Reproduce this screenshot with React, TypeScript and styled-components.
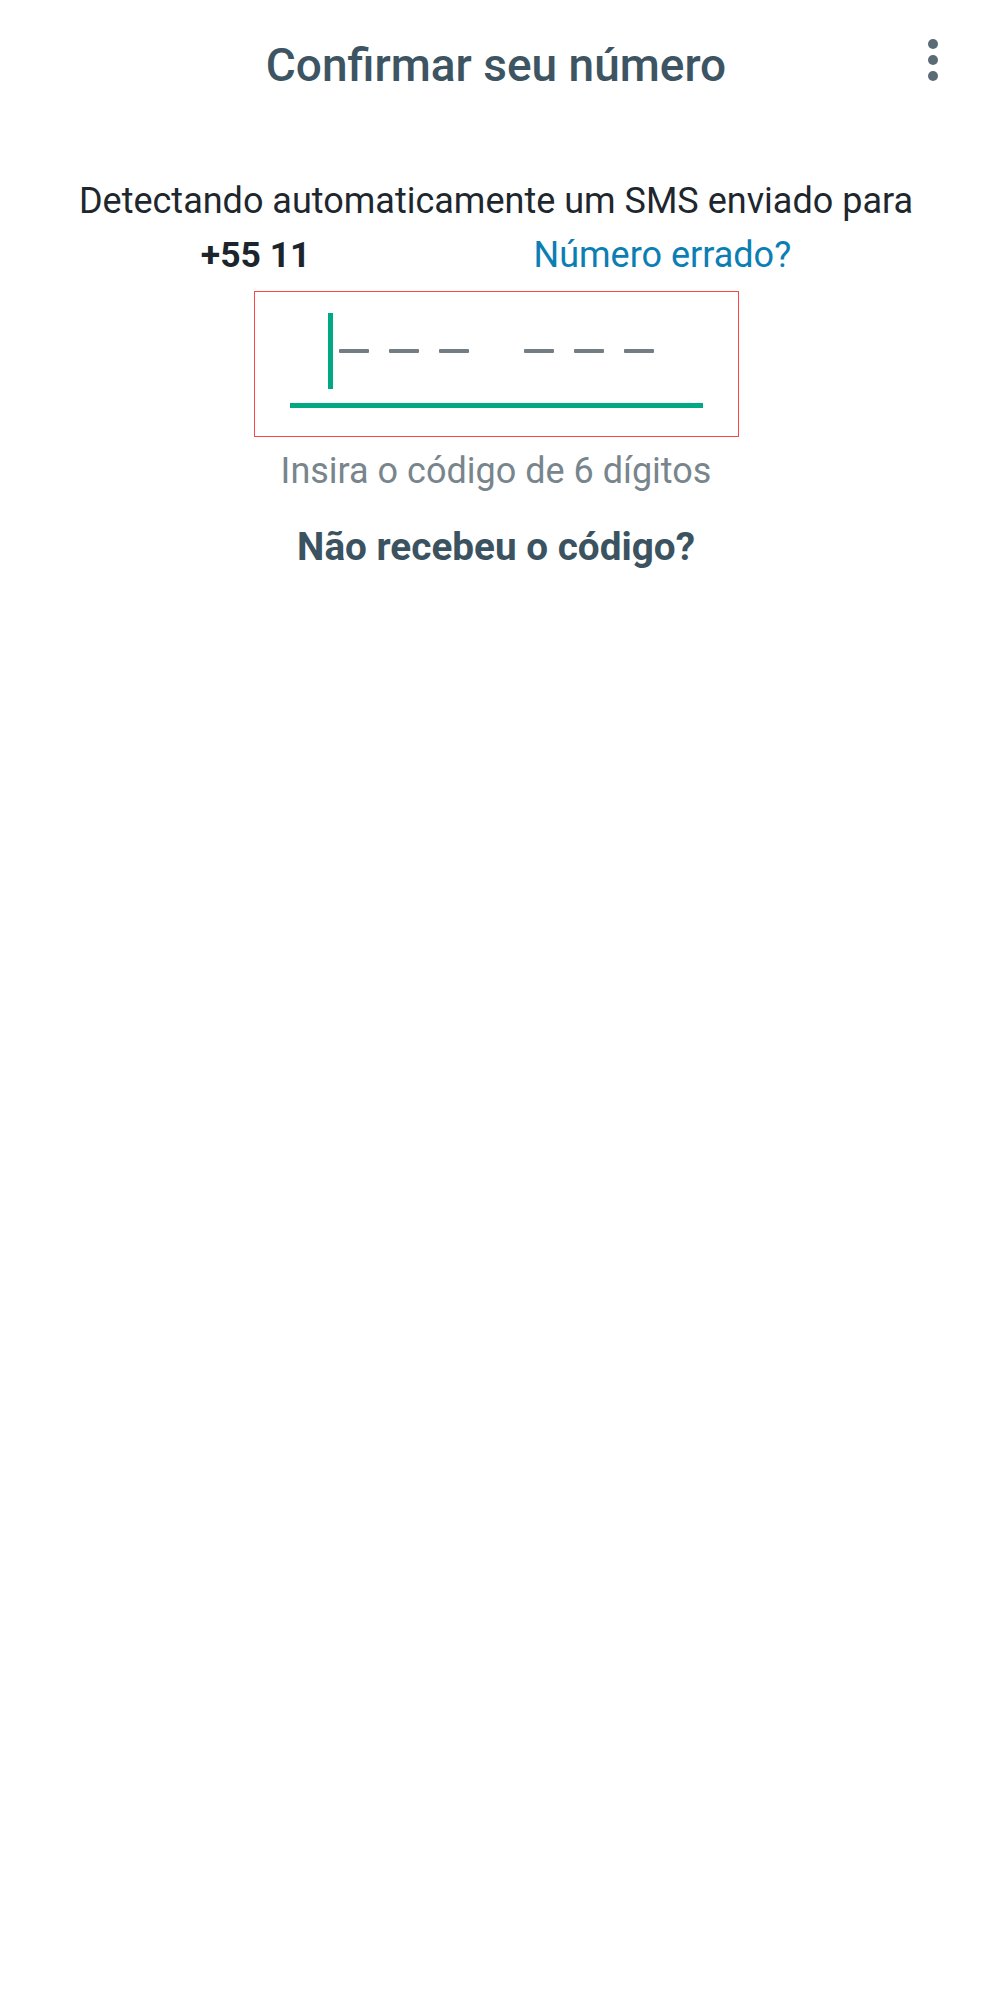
import React from "react";
import styled, { createGlobalStyle } from "styled-components";

const GlobalStyle = createGlobalStyle`
    html, body {
        margin: 0;
        padding: 0;
        background: #ffffff;
    }
    body {
        font-family: Roboto, "Noto Sans", "Liberation Sans", sans-serif;
        min-height: 1999px;
    }
`;

const Page = styled.div`
    width: 992px;
    display: flex;
    flex-direction: column;
    align-items: center;
`;

const Header = styled.div`
    width: 100%;
    box-sizing: border-box;
    padding-top: 38px;
    display: grid;
    grid-template-columns: 1fr auto 1fr;
    align-items: center;
`;

const Title = styled.h1`
    grid-column: 2;
    margin: 0;
    font-size: 46px;
    line-height: 54px;
    font-weight: 500;
    color: #3d5563;
`;

const MenuButton = styled.div`
    grid-column: 3;
    justify-self: end;
    padding-right: 53px;
    margin-top: -11px;
    display: flex;
    align-items: center;
`;

const Description = styled.div`
    margin-top: 82px;
    display: flex;
    flex-direction: column;
    align-items: center;
    font-size: 36px;
    line-height: 54px;
    color: #1e272d;
`;

const NumberRow = styled.div`
    display: flex;
    align-items: baseline;
`;

const PhoneNumber = styled.span`
    font-weight: 700;
    font-size: 35.5px;
    color: #1b252b;
`;

const HiddenDigits = styled.span`
    display: inline-block;
    width: 223px;
`;

const WrongNumberLink = styled.span`
    color: #0b7eb4;
`;

const CodeBox = styled.div`
    margin-top: 9px;
    width: 485px;
    height: 146px;
    box-sizing: border-box;
    border: 1px solid #ff4646;
    padding-top: 21px;
    display: flex;
    flex-direction: column;
    align-items: center;
`;

const CodeField = styled.div`
    width: 413px;
    display: flex;
    flex-direction: column;
`;

const CodeRow = styled.div`
    height: 76px;
    padding-left: 38px;
    display: flex;
    align-items: center;
`;

const Cursor = styled.div`
    width: 5px;
    height: 76px;
    background: #00a884;
    margin-right: 6px;
`;

const DashGroup = styled.div<{ $gapAfter?: number }>`
    display: flex;
    gap: 20px;
    margin-right: ${(p) => p.$gapAfter ?? 0}px;
`;

const Dash = styled.div`
    width: 30px;
    height: 4px;
    border-radius: 1px;
    background: #727d84;
`;

const Underline = styled.div`
    margin-top: 14px;
    height: 5px;
    background: #00a884;
`;

const Hint = styled.div`
    margin-top: 14px;
    font-size: 36px;
    line-height: 40px;
    color: #78858c;
`;

const ResendLink = styled.div`
    margin-top: 34px;
    font-size: 38.7px;
    line-height: 44px;
    font-weight: 700;
    color: #3b5361;
`;

function KebabIcon() {
    return (
        <svg width="12" height="44" viewBox="0 0 12 44">
            <circle cx="6" cy="6" r="5" fill="#5b6b76" />
            <circle cx="6" cy="22" r="5" fill="#5b6b76" />
            <circle cx="6" cy="38" r="5" fill="#5b6b76" />
        </svg>
    );
}

export default function App() {
    return (
        <React.Fragment>
            <GlobalStyle />
            <Page>
                <Header>
                    <Title>Confirmar seu número</Title>
                    <MenuButton>
                        <KebabIcon />
                    </MenuButton>
                </Header>

                <Description>
                    <div>Detectando automaticamente um SMS enviado para</div>
                    <NumberRow>
                        <PhoneNumber>+55 11</PhoneNumber>
                        <HiddenDigits />
                        <WrongNumberLink>Número errado?</WrongNumberLink>
                    </NumberRow>
                </Description>

                {/* campo do código */}
                <CodeBox>
                    <CodeField>
                        <CodeRow>
                            <Cursor />
                            <DashGroup $gapAfter={55}>
                                <Dash />
                                <Dash />
                                <Dash />
                            </DashGroup>
                            <DashGroup>
                                <Dash />
                                <Dash />
                                <Dash />
                            </DashGroup>
                        </CodeRow>
                        <Underline />
                    </CodeField>
                </CodeBox>

                <Hint>Insira o código de 6 dígitos</Hint>
                <ResendLink>Não recebeu o código?</ResendLink>
            </Page>
        </React.Fragment>
    );
}
